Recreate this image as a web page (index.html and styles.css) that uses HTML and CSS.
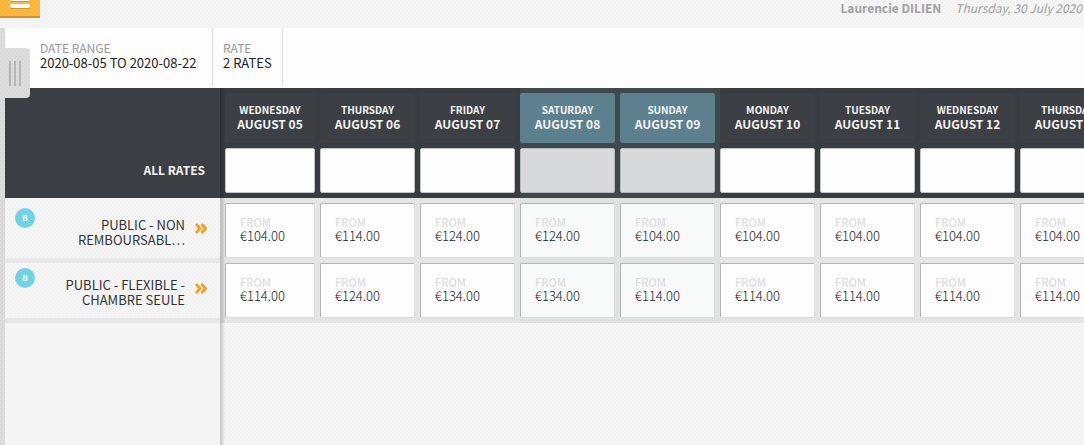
FILE: index.html
```html
<!DOCTYPE html>
<html lang="en">

<head>
  <meta charset="utf-8">
  <meta name="viewport" content="width=device-width, initial-scale=1">
  <title>Rates planning</title>
  <link rel="stylesheet" href="styles.css">
</head>

<body>

  <!-- Top bar -->
  <header class="topbar">
    <button type="button" class="menu-btn" aria-label="Menu"><span></span><span></span><span></span></button>
    <p class="session"><strong>Laurencie DILIEN</strong><em>Thursday, 30 July 2020</em></p>
  </header>

  <div class="workspace">
    <div class="rail">
      <button type="button" class="rail-handle" aria-label="Open panel"><i></i><i></i><i></i></button>
    </div>

    <main class="planning">
      <!-- Filters -->
      <dl class="filters">
        <div class="filter">
          <dt>DATE RANGE</dt>
          <dd>2020-08-05 TO 2020-08-22</dd>
        </div>
        <div class="filter">
          <dt>RATE</dt>
          <dd>2 RATES</dd>
        </div>
      </dl>

      <!-- Rates table -->
      <div class="board">
        <table class="rates">
          <thead>
            <tr class="days" id="days">
              <td class="side"></td>
            </tr>
            <tr class="all" id="allRates">
              <th class="side" scope="row">ALL RATES</th>
            </tr>
          </thead>
          <tbody id="rateRows"></tbody>
        </table>
      </div>
    </main>
  </div>

  <script src="rates.js"></script>
</body>

</html>
```
FILE: styles.css
```css
* {
  box-sizing: border-box;
}

:root {
  --dot: conic-gradient(at 1px 1px, transparent 75%, rgba(0, 0, 0, 0.04) 0);
}

body {
  margin: 0;
  min-height: 100vh;
  display: flex;
  flex-direction: column;
  overflow: hidden;
  font-family: "Noto Sans CJK SC", "Open Sans", sans-serif;
  font-size: 13px;
  line-height: 15px;
  color: #222;
  background-color: #f5f5f5;
}

/* Paper texture */
body,
.rail,
.rail-handle,
.menu-btn,
.rates tbody .side {
  background-image: var(--dot), var(--dot);
  background-size: 4px 4px;
  background-position: 0 0, 2px 2px;
}

button,
input {
  font: inherit;
  color: inherit;
  border: 0;
  padding: 0;
  margin: 0;
}

/* Top bar */
.topbar {
  display: flex;
  justify-content: space-between;
  height: 28px;
}

.menu-btn {
  display: flex;
  flex-direction: column;
  justify-content: flex-end;
  align-items: center;
  gap: 3px;
  width: 40px;
  height: 18px;
  padding-bottom: 8px;
  overflow: hidden;
  background-color: #fbb83b;
  border-bottom: 2px solid #cd942f;
}

.menu-btn span {
  flex: none;
  width: 20px;
  height: 4px;
  border-radius: 2px;
  background: #fff;
  box-shadow: 0 1px 0 #cd942f;
}

.session {
  display: flex;
  gap: 14px;
  margin: 0;
  padding-right: 2px;
  font-size: 12px;
  color: #a0a0a0;
}

.session strong {
  font-weight: 600;
}

/* Left rail */
.workspace {
  display: flex;
  flex: 1;
}

.rail {
  position: relative;
  width: 5px;
  background-color: #dcdcdc;
}

.rail-handle {
  position: absolute;
  top: 20px;
  left: 0;
  z-index: 2;
  display: flex;
  justify-content: center;
  align-items: center;
  gap: 3px;
  width: 30px;
  height: 50px;
  background-color: #dcdcdc;
  border-radius: 0 4px 4px 0;
}

.rail-handle i {
  width: 2px;
  height: 25px;
  background: #b5b5b5;
}

.planning {
  display: flex;
  flex-direction: column;
  flex: 1;
  min-width: 0;
}

/* Filters */
.filters {
  display: flex;
  margin: 0;
  height: 60px;
  padding: 0 0 2px 25px;
  background: #fdfdfd;
}

.filter {
  padding: 12px 10px 0;
  border-right: 1px solid #ddd;
}

.filter:first-child {
  width: 183px;
}

.filter dt {
  font-size: 12px;
  color: #999;
}

.filter dd {
  margin: 0;
}

/* Rates table */
.board {
  flex: 1;
  overflow: hidden;
  background: linear-gradient(90deg, #f4f4f4 215px, #c4c4c4 215px, transparent 220px);
}

.rates {
  width: 1115px;
  table-layout: fixed;
  border-spacing: 0;
}

.rates th,
.rates td {
  width: 100px;
  padding: 5px 5px 0 0;
  vertical-align: top;
}

.rates .side {
  width: 215px;
}

.rates .first {
  padding-left: 5px;
}

.rates thead {
  background: #393c40;
  color: #f5f5f5;
  font-size: 12px;
}

.rates thead .side {
  background: #3c3f43;
  font-weight: 600;
  text-align: right;
  padding: 19px 15px 0 0;
}

.rates thead .weekend {
  background: #3f484b;
}

.rates thead .first {
  background-image: linear-gradient(90deg, #2c2e31, transparent 5px);
}

.day {
  height: 50px;
  padding-top: 10px;
  border-radius: 2px;
  background: #3c3f43;
  font-weight: 600;
  line-height: 14px;
  text-align: center;
}

.day span {
  display: block;
  font-size: 10px;
}

.weekend .day {
  background: #5c808d;
}

.all td {
  height: 55px;
}

.all input {
  display: block;
  width: 100%;
  height: 45px;
  background: #fdfdfd;
  border: 1px solid #c4c4c4;
  border-radius: 2px;
}

.all .weekend input {
  background: #d7d9db;
  border-color: #b4b8ba;
}

.rates tbody td {
  padding-bottom: 5px;
  background-color: rgba(0, 0, 0, 0.06);
}

.rates tbody tr + tr td {
  padding-top: 0;
}

.rates tbody .weekend {
  background-color: rgba(0, 30, 25, 0.08);
}

.rates tbody .first {
  background-image: linear-gradient(90deg, #c0c0c0, transparent 5px);
}

.price {
  display: block;
  width: 100%;
  height: 55px;
  padding: 0 0 4px 14px;
  text-align: left;
  font-weight: 300;
  line-height: 14px;
  background: #fdfdfd;
  border: 1px solid #ddd;
  border-top-color: #b4b4b4;
  border-left-color: #b4b4b4;
  border-radius: 2px;
}

.price span {
  display: block;
  font-size: 11px;
  font-weight: 500;
  color: #ddd;
}

.weekend .price {
  background: #f8fafa;
}

.rates tbody .side {
  padding: 0;
  font-weight: 400;
  background-color: #f5f5f5;
  border-bottom: 5px solid #e8e8e8;
}

.rate {
  display: flex;
  justify-content: flex-end;
  gap: 10px;
  padding: 19px 13px 0 10px;
  text-align: right;
}

.rates tbody tr + tr .rate {
  padding-top: 14px;
}

.rate a {
  width: 125px;
  color: #333;
  text-decoration: none;
}

.badge {
  width: 20px;
  height: 20px;
  margin: -9px auto 0 0;
  border-radius: 50%;
  background: #73d1e6;
  color: #fff;
  font-size: 8px;
  font-weight: 700;
  line-height: 20px;
  text-align: center;
}

.rate svg {
  margin-top: 6px;
  width: 12px;
  height: 11px;
}
```
FILE: rates.js
```js
const days = [
  ['WEDNESDAY', '05'], ['THURSDAY', '06'], ['FRIDAY', '07'],
  ['SATURDAY', '08'], ['SUNDAY', '09'], ['MONDAY', '10'],
  ['TUESDAY', '11'], ['WEDNESDAY', '12'], ['THURSDAY', '13']
];

const rates = [
  { name: 'PUBLIC - NON REMBOURSABL…', prices: [104, 114, 124, 124, 104, 104, 104, 104, 104] },
  { name: 'PUBLIC - FLEXIBLE - CHAMBRE SEULE', prices: [114, 124, 134, 134, 114, 114, 114, 114, 114] }
];

function cellClass(i) {
  const name = days[i][0];
  if (i === 0) return 'first';
  return name === 'SATURDAY' || name === 'SUNDAY' ? 'weekend' : '';
}

const daysRow = document.getElementById('days');
const allRow = document.getElementById('allRates');

days.forEach(function (day, i) {
  daysRow.innerHTML += `<th scope="col" class="${cellClass(i)}"><div class="day"><span>${day[0]}</span>AUGUST ${day[1]}</div></th>`;
  allRow.innerHTML += `<td class="${cellClass(i)}"><input type="text" aria-label="All rates, August ${day[1]}"></td>`;
});

document.getElementById('rateRows').innerHTML = rates.map(function (rate) {
  const cells = rate.prices.map(function (price, i) {
    return `<td class="${cellClass(i)}"><button type="button" class="price"><span>FROM</span>€${price}.00</button></td>`;
  }).join('');
  return `<tr>
    <th class="side" scope="row">
      <div class="rate">
        <span class="badge">B</span>
        <a href="#">${rate.name}</a>
        <svg viewBox="0 0 12 11" fill="none" stroke="#f99d1c" stroke-width="2.8"><path d="M1 1l4 4.500L1 10M6.500 1l4 4.500L6.500 10"/></svg>
      </div>
    </th>${cells}
  </tr>`;
}).join('');
```
